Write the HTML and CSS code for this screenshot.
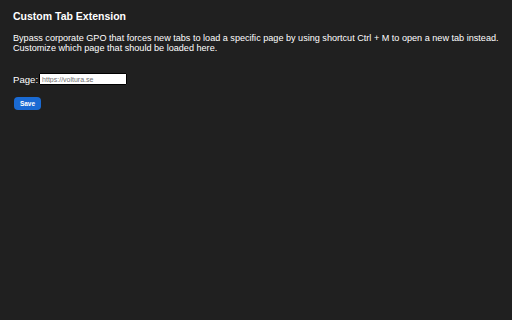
FILE: index.html
```html
<!DOCTYPE html>
<html>
<head>
<meta charset="utf-8">
<link rel="stylesheet" href="styles.css">
</head>
<body>
<div class="page">
  <h1 class="title">Custom Tab Extension</h1>
  <p class="desc">Bypass corporate GPO that forces new tabs to load a specific page by using shortcut Ctrl + M to open a new tab instead.<br>Customize which page that should be loaded here.</p>
  <div class="field">
    <label class="label" for="url">Page:</label>
    <input class="input" id="url" type="text" placeholder="https://voltura.se">
  </div>
  <button class="save">Save</button>
</div>
</body>
</html>
```

FILE: styles.css
```css
html, body {
  margin: 0;
  padding: 0;
  background: #202020;
  height: 100%;
}
.page {
  padding: 10px 13px;
  font-family: "Liberation Sans", Arial, sans-serif;
  color: #ffffff;
}
.title {
  margin: 0;
  font-size: 10.5px;
  font-weight: bold;
  line-height: 12px;
}
.desc {
  margin: 11px 0 0;
  font-size: 9.1px;
  line-height: 10px;
}
.field {
  margin-top: 20px;
  display: flex;
  align-items: center;
  gap: 1px;
}
.label {
  font-size: 9.6px;
}
.input {
  box-sizing: border-box;
  width: 88px;
  height: 12px;
  margin: 0;
  padding: 0 2px;
  border: 1px solid #000;
  border-radius: 1px;
  background: #fff;
  font-family: "Liberation Sans", Arial, sans-serif;
  font-size: 7px;
  outline: none;
}
.input::placeholder {
  color: #6f6f6f;
}
.save {
  margin-top: 12px;
  margin-left: 1px;
  width: 27px;
  height: 13px;
  padding: 0;
  border: none;
  border-radius: 4px;
  background: #1a6ad3;
  color: #fff;
  font-family: "Liberation Sans", Arial, sans-serif;
  font-size: 6.5px;
  font-weight: bold;
  display: block;
}
```
